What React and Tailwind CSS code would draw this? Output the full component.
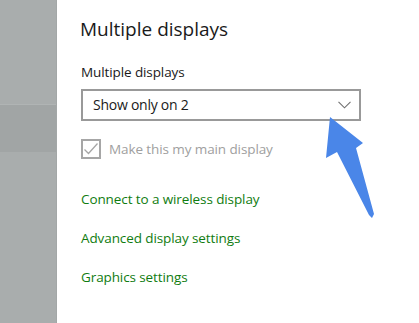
import React from "react";

const links = [
  "Connect to a wireless display",
  "Advanced display settings",
  "Graphics settings",
];

const Chevron = () => (
  <svg width="13" height="8" viewBox="0 0 13 8" fill="none">
    <path d="M0.5 0.8 L6.5 6.8 L12.5 0.8" stroke="#707070" strokeWidth="1.1" />
  </svg>
);

const CheckMark = () => (
  <svg width="16" height="16" viewBox="0 0 16 16" fill="none">
    <path d="M1.5 8.5 L5.5 12.5 L14.5 2.5" stroke="#a6a6a6" strokeWidth="1.3" />
  </svg>
);

// blue callout arrow pointing at the dropdown
const Arrow = () => (
  <svg
    className="absolute left-0 top-0 pointer-events-none"
    width="419"
    height="323"
    viewBox="0 0 419 323"
  >
    <polygon
      points="330,117 363,143 356,148 374,214 372,218 369,215 337,152 326,158"
      fill="#4a86e8"
    />
  </svg>
);

export default function App() {
  return (
    <div
      className="relative flex w-[419px] h-[323px] overflow-hidden bg-white"
      style={{ fontFamily: '"Open Sans", "Noto Sans", sans-serif' }}
    >
      {/* dimmed left pane */}
      <div className="flex flex-col w-[57px] shrink-0 bg-[#a9adad] border-r border-[#a3a7a7]">
        <div className="h-[104px]" />
        <div className="h-[48px] bg-[#a1a5a5] border-t border-[#b0b4b4]" />
      </div>

      <div className="flex flex-col pl-[23px] pt-[15px] text-[#1a1a1a]">
        <h1 className="text-[19px] leading-[28px] font-normal">Multiple displays</h1>

        <div className="mt-[19px] ml-[1px] text-[13.5px] leading-[20px] tracking-[-0.1px]">Multiple displays</div>

        <div className="mt-[7px] ml-[1px] flex items-center justify-between w-[280px] h-[32px] border-2 border-[#999999] pl-[10px] pr-[8px]">
          <span className="text-[14px] leading-[20px] tracking-[-0.25px]">Show only on 2</span>
          <Chevron />
        </div>

        <div className="mt-[18px] ml-[1px] flex items-center gap-[8px]">
          <div className="flex items-center justify-center w-[20px] h-[20px] border-2 border-[#a6a6a6]">
            <CheckMark />
          </div>
          <span className="text-[13.5px] leading-[20px] tracking-[-0.1px] text-[#a0a0a0]">Make this my main display</span>
        </div>

        <div className="mt-[30px] ml-[1px] flex flex-col gap-[19px]">
          {links.map((l) => (
            <span key={l} className="text-[13.5px] leading-[20px] tracking-[-0.1px] text-[#107c10]">
              {l}
            </span>
          ))}
        </div>
      </div>

      <Arrow />
    </div>
  );
}
